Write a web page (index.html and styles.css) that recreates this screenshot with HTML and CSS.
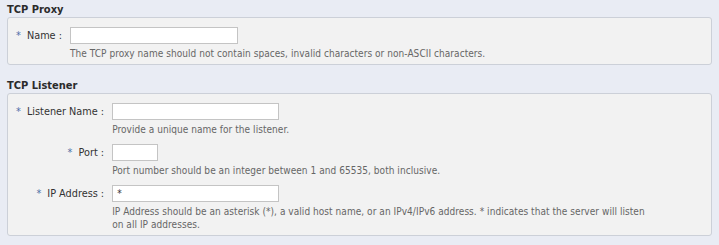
FILE: index.html
```html
<!DOCTYPE html>
<html lang="en">
<head>
  <meta charset="UTF-8">
  <title>TCP Proxy</title>
  <link rel="stylesheet" href="styles.css">
</head>
<body>

  <div class="section">
    <h2>TCP Proxy</h2>
    <div class="box">
      <div class="row">
        <label class="label" for="name"><span class="req">*</span> Name :</label>
        <div class="field">
          <input type="text" id="name" class="text wide">
          <div class="hint">The TCP proxy name should not contain spaces, invalid characters or non-ASCII characters.</div>
        </div>
      </div>
    </div>
  </div>

  <div class="section">
    <h2>TCP Listener</h2>
    <div class="box">
      <div class="row">
        <label class="label" for="lname"><span class="req">*</span> Listener Name :</label>
        <div class="field">
          <input type="text" id="lname" class="text">
          <div class="hint">Provide a unique name for the listener.</div>
        </div>
      </div>
      <div class="row">
        <label class="label" for="port"><span class="req">*</span> Port :</label>
        <div class="field">
          <input type="text" id="port" class="text short">
          <div class="hint">Port number should be an integer between 1 and 65535, both inclusive.</div>
        </div>
      </div>
      <div class="row">
        <label class="label" for="ip"><span class="req">*</span> IP Address :</label>
        <div class="field">
          <input type="text" id="ip" class="text" value="*">
          <div class="hint">IP Address should be an asterisk (*), a valid host name, or an IPv4/IPv6 address. * indicates that the server will listen on all IP addresses.</div>
        </div>
      </div>
    </div>
  </div>

</body>
</html>
```

FILE: styles.css
```css
body {
  margin: 0;
  padding: 2px 7px 0 7px;
  background: #e9ecf4;
  font-family: "DejaVu Sans Condensed", "DejaVu Sans", sans-serif;
  font-size: 10px;
  letter-spacing: 0.05px;
  color: #333;
}
.section {
  margin-bottom: 13px;
}
h2 {
  margin: 0;
  font-size: 11px;
  line-height: 15px;
  font-weight: bold;
  letter-spacing: 0;
  color: #2b2b2b;
}
.box {
  background: #f2f2f2;
  border: 1px solid #ccd0d8;
  border-radius: 3px;
  padding: 9px 8px 4px 8px;
  display: grid;
  grid-template-columns: auto 1fr;
  column-gap: 8px;
}
.row {
  display: contents;
}
.label {
  text-align: right;
  line-height: 17px;
  white-space: nowrap;
  font-size: 10.8px;
  letter-spacing: 0;
}
.req {
  color: #4f6fa8;
  margin-right: 3px;
}
.field {
  margin-bottom: 8px;
}
.row:last-child .field {
  margin-bottom: 0;
}
.text {
  display: block;
  box-sizing: border-box;
  width: 167px;
  height: 17px;
  margin: 0;
  padding: 0 4px;
  border: 1px solid #c4c4c4;
  background: #fff;
  font-family: inherit;
  font-size: 10px;
  color: #333;
}
.wide {
  width: 168px;
}
.short {
  width: 46px;
}
.hint {
  margin-top: 3px;
  line-height: 13px;
  color: #666;
  max-width: 540px;
}
```
